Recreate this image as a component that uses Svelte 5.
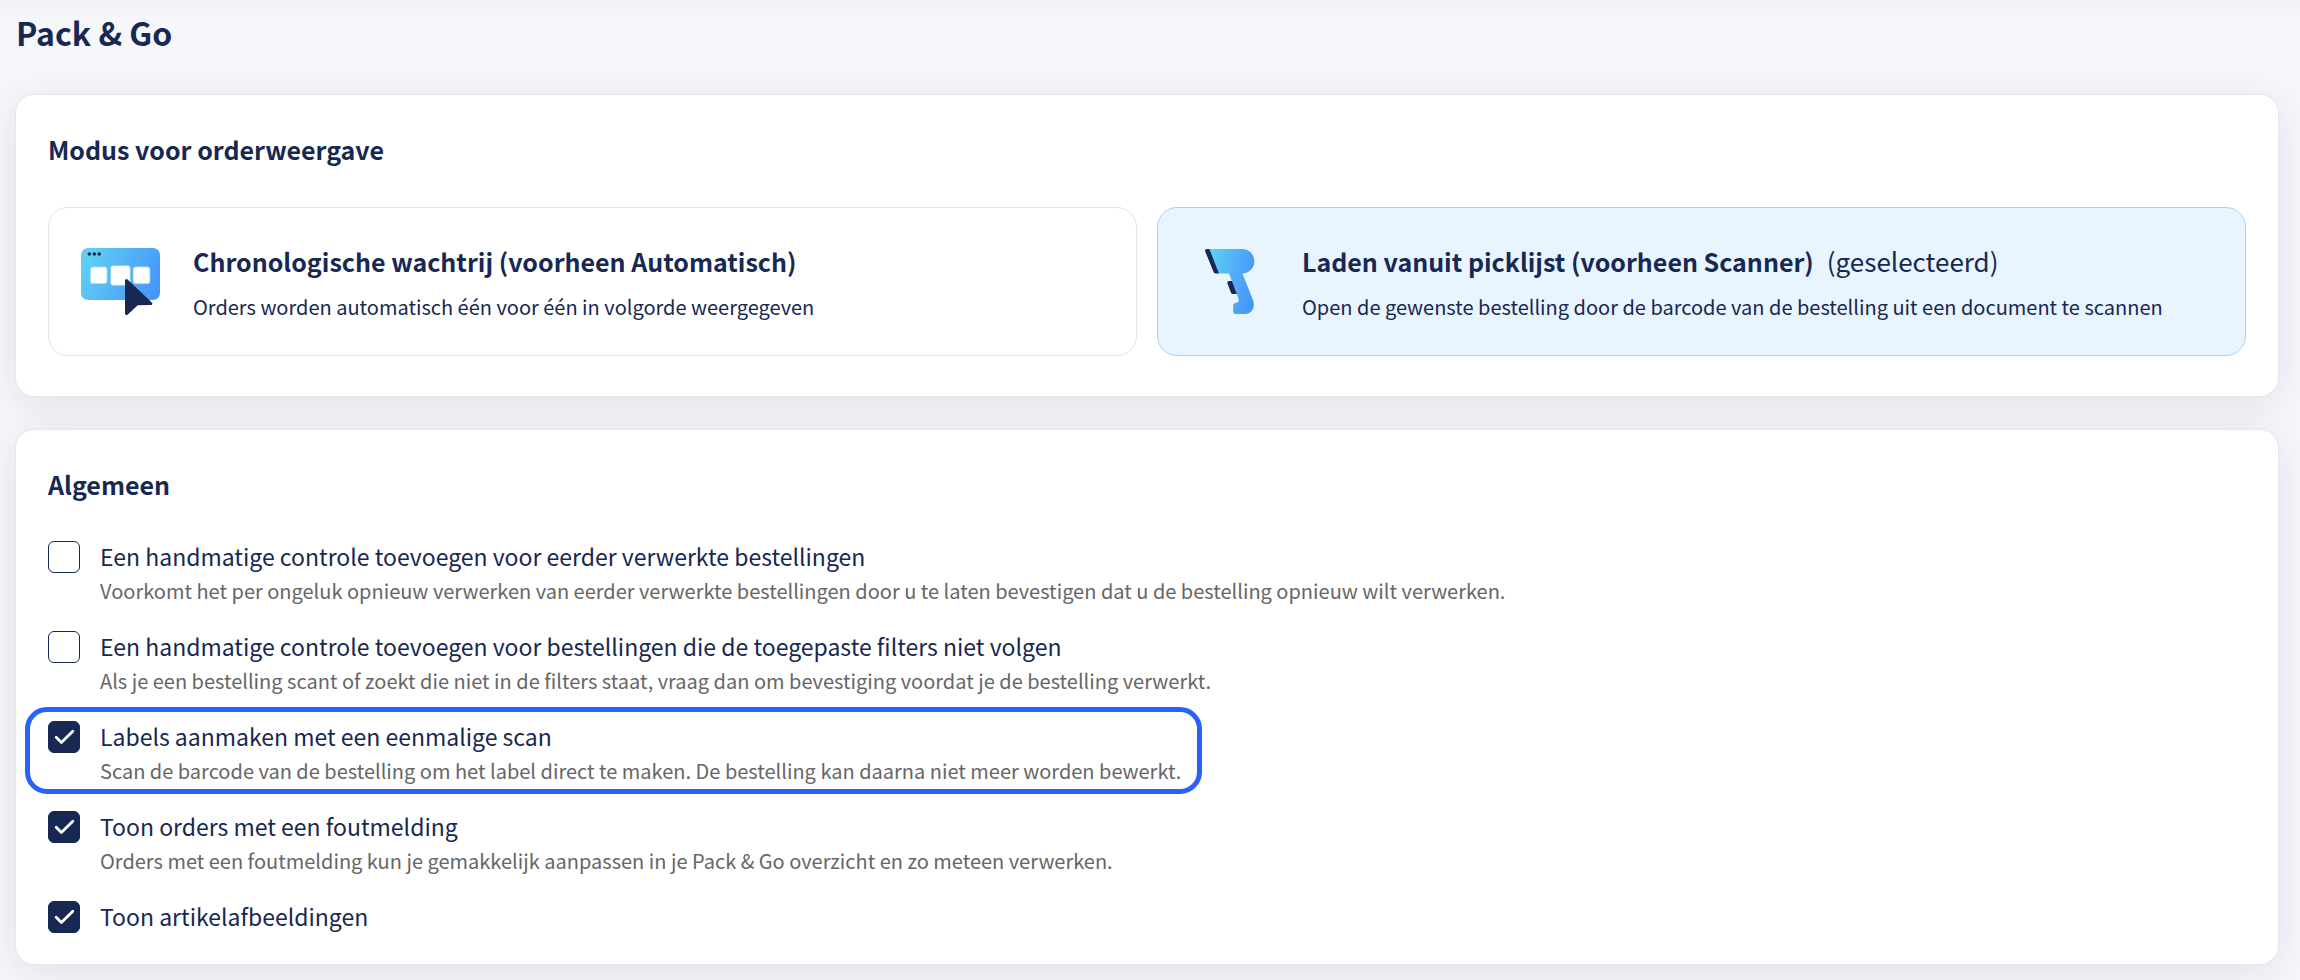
<script>
  let mode = $state('picklist');

  let settings = $state([
    {
      id: 'recheck-processed',
      label: 'Een handmatige controle toevoegen voor eerder verwerkte bestellingen',
      hint: 'Voorkomt het per ongeluk opnieuw verwerken van eerder verwerkte bestellingen door u te laten bevestigen dat u de bestelling opnieuw wilt verwerken.',
      checked: false
    },
    {
      id: 'recheck-filters',
      label: 'Een handmatige controle toevoegen voor bestellingen die de toegepaste filters niet volgen',
      hint: 'Als je een bestelling scant of zoekt die niet in de filters staat, vraag dan om bevestiging voordat je de bestelling verwerkt.',
      checked: false
    },
    {
      id: 'single-scan',
      label: 'Labels aanmaken met een eenmalige scan',
      hint: 'Scan de barcode van de bestelling om het label direct te maken. De bestelling kan daarna niet meer worden bewerkt.',
      checked: true,
      highlighted: true
    },
    {
      id: 'show-errors',
      label: 'Toon orders met een foutmelding',
      hint: 'Orders met een foutmelding kun je gemakkelijk aanpassen in je Pack & Go overzicht en zo meteen verwerken.',
      checked: true
    },
    { id: 'show-images', label: 'Toon artikelafbeeldingen', checked: true }
  ]);
</script>

{#snippet queueIcon()}
  <svg class="icon" viewBox="0 0 80 80" aria-hidden="true">
    <defs>
      <linearGradient id="queue-fill" x1="0" y1="0.35" x2="1" y2="0.65">
        <stop offset="0" stop-color="#5fd0f3" />
        <stop offset="1" stop-color="#4796f9" />
      </linearGradient>
    </defs>
    <rect x="0" y="6" width="79" height="52" rx="7" fill="url(#queue-fill)" />
    <g fill="#172852">
      <circle cx="8.3" cy="12" r="1.8" />
      <circle cx="13.3" cy="12" r="1.8" />
      <circle cx="18.2" cy="12" r="1.8" />
    </g>
    <g fill="#fff" stroke="#7fcdf8" stroke-width="0.8">
      <rect x="9.2" y="24.8" width="17" height="17" rx="2.6" />
      <rect x="29.4" y="23.4" width="20" height="20" rx="3" />
      <rect x="52" y="24.8" width="17" height="17" rx="2.6" />
    </g>
    <path
      d="M45.5 38.6 L69.8 61.6 L56 61.8 L45.5 71.6 Z"
      fill="#172852"
      stroke="#172852"
      stroke-width="3"
      stroke-linejoin="round"
    />
  </svg>
{/snippet}

{#snippet scannerIcon()}
  <svg class="icon" viewBox="0 0 80 80" aria-hidden="true">
    <defs>
      <linearGradient id="scanner-fill" x1="0" y1="0.2" x2="1" y2="0.45">
        <stop offset="0" stop-color="#5fd0f3" />
        <stop offset="1" stop-color="#4796f9" />
      </linearGradient>
    </defs>
    <path
      d="M18.5 7 H52 A12.2 12.2 0 0 1 52.4 31.4 L63 58 C65.5 65 62 72 55 72 H45.5 Q43.2 72 43.2 69.7 V63.5 Q43.2 61.2 45.5 60.9 C48.6 60.5 49.2 59 48.4 56.5 L39 31.6 H27 Z"
      fill="url(#scanner-fill)"
    />
    <path
      d="M17 7 H19.4 L28.9 31.6 H25.8 Q24.2 31.6 23.6 30 L15.2 9.4 Q14.6 7 17 7 Z"
      fill="#172852"
    />
    <path d="M38.8 39 H42 L46.8 52 H42.8 Q41.5 52 41 50.7 L37.4 41.2 Q37 39.2 38.8 39 Z" fill="#172852" />
  </svg>
{/snippet}

<main>
  <h1>Pack &amp; Go</h1>

  <section class="card" aria-labelledby="mode-title">
    <h2 id="mode-title">Modus voor orderweergave</h2>
    <div class="modes">
      <button
        type="button"
        class="mode"
        class:selected={mode === 'queue'}
        aria-pressed={mode === 'queue'}
        onclick={() => (mode = 'queue')}
      >
        {@render queueIcon()}
        <span class="mode-text">
          <span class="mode-title">
            <strong>Chronologische wachtrij (voorheen Automatisch)</strong>
            {#if mode === 'queue'}<span class="state">(geselecteerd)</span>{/if}
          </span>
          <span class="mode-hint">Orders worden automatisch één voor één in volgorde weergegeven</span>
        </span>
      </button>
      <button
        type="button"
        class="mode"
        class:selected={mode === 'picklist'}
        aria-pressed={mode === 'picklist'}
        onclick={() => (mode = 'picklist')}
      >
        {@render scannerIcon()}
        <span class="mode-text">
          <span class="mode-title">
            <strong>Laden vanuit picklijst (voorheen Scanner)</strong>
            {#if mode === 'picklist'}<span class="state">(geselecteerd)</span>{/if}
          </span>
          <span class="mode-hint">Open de gewenste bestelling door de barcode van de bestelling uit een document te scannen</span>
        </span>
      </button>
    </div>
  </section>

  <section class="card general" aria-labelledby="general-title">
    <h2 id="general-title">Algemeen</h2>
    <div class="settings">
      {#each settings as item (item.id)}
        <div class="setting" class:highlighted={item.highlighted}>
          <span class="box">
            <input
              type="checkbox"
              id={item.id}
              bind:checked={item.checked}
              aria-describedby={item.hint ? `${item.id}-hint` : undefined}
            />
            <svg viewBox="0 0 32 32" aria-hidden="true">
              <path d="M8.2 16.2 L13.4 21.4 L24.8 10.2" />
            </svg>
          </span>
          <div class="setting-text">
            <label for={item.id}>{item.label}</label>
            {#if item.hint}<p id="{item.id}-hint">{item.hint}</p>{/if}
          </div>
        </div>
      {/each}
    </div>
  </section>
</main>

<style>
  :global(body) {
    margin: 0;
    background: #f6f7fb;
  }

  main {
    --navy: #172852;
    box-sizing: border-box;
    min-height: 100vh;
    padding: 8px 22px 16px 16px;
    color: var(--navy);
    font-family: 'Noto Sans CJK JP', 'Noto Sans', sans-serif;
    background: linear-gradient(#f1f2f6, #f6f7fb 20px);
    overflow: hidden;
  }

  h1,
  h2,
  p {
    margin: 0;
  }

  h1 {
    margin-bottom: 39px;
    font-size: 32px;
    line-height: 48px;
    font-weight: 600;
  }

  h2 {
    font-size: 25px;
    line-height: 36px;
    font-weight: 600;
  }

  .card {
    padding: 36px 32px 40px;
    border-radius: 18px;
    background: #fff;
    box-shadow:
      0 0 0 1px #e6e6ea,
      0 8px 40px rgba(23, 30, 72, 0.1);
  }

  .card + .card {
    margin-top: 34px;
  }

  .general {
    padding-bottom: 30px;
  }

  .modes {
    display: grid;
    grid-template-columns: 1fr 1fr;
    gap: 20px;
    margin-top: 40px;
  }

  .mode {
    display: flex;
    align-items: center;
    gap: 32px;
    padding: 31px 32px;
    border: 1px solid #e4e4e6;
    border-radius: 20px;
    background: #fff;
    color: inherit;
    font: inherit;
    text-align: left;
    cursor: pointer;
  }

  .mode.selected {
    border-color: #abcffa;
    background: #e8f4fe;
  }

  .icon {
    flex: none;
    width: 80px;
    height: 80px;
  }

  .mode-text {
    display: flex;
    flex-direction: column;
    gap: 11px;
    padding-top: 4px;
  }

  .mode-title {
    display: flex;
    flex-wrap: wrap;
    column-gap: 13px;
    font-size: 25px;
    line-height: 36px;
  }

  .mode-title strong {
    font-weight: 600;
  }

  .state {
    font-size: 26px;
  }

  .mode-hint {
    font-size: 20px;
    line-height: 34px;
  }

  .settings {
    display: flex;
    flex-direction: column;
    align-items: flex-start;
    gap: 20px;
    margin-top: 36px;
  }

  .setting {
    position: relative;
    display: flex;
    gap: 20px;
  }

  .highlighted::after {
    content: '';
    position: absolute;
    inset: -11px -21px -6px -23px;
    border: 5px solid #2962fb;
    border-radius: 22px;
    pointer-events: none;
  }

  .box {
    display: grid;
    flex: none;
    width: 32px;
    height: 32px;
    margin-top: 3px;
  }

  .box input,
  .box svg {
    grid-area: 1 / 1;
    width: 32px;
    height: 32px;
  }

  .box input {
    appearance: none;
    box-sizing: border-box;
    margin: 0;
    border: 1px solid var(--navy);
    border-radius: 6px;
    background: #fff;
    cursor: pointer;
  }

  .box input:checked {
    background: var(--navy);
  }

  .box svg {
    fill: none;
    stroke: #fff;
    stroke-width: 2.8;
    stroke-linecap: round;
    stroke-linejoin: round;
    visibility: hidden;
    pointer-events: none;
  }

  .box input:checked + svg {
    visibility: visible;
  }

  .setting label {
    display: block;
    font-size: 23px;
    line-height: 36px;
    cursor: pointer;
  }

  .setting p {
    color: #666;
    font-size: 20px;
    line-height: 34px;
  }
</style>
